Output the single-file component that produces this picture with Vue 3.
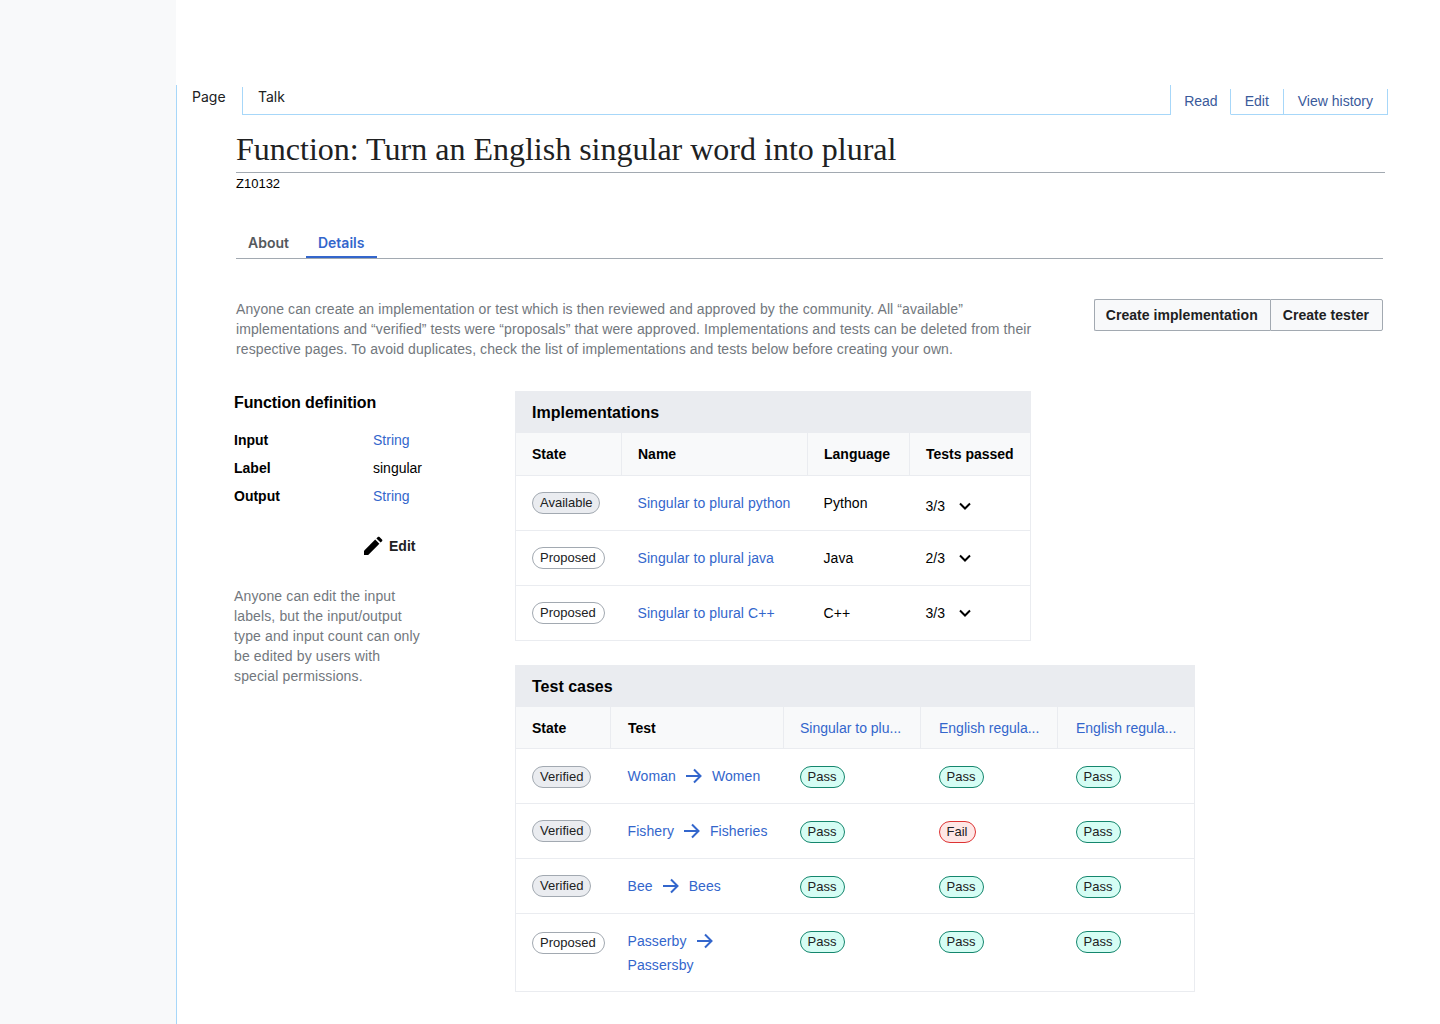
<script setup>
const implementations = [
  { state: "Available", name: "Singular to plural python", language: "Python", tests: "3/3", low: true },
  { state: "Proposed", name: "Singular to plural java", language: "Java", tests: "2/3" },
  { state: "Proposed", name: "Singular to plural C++", language: "C++", tests: "3/3" }
];

const testCases = [
  { state: "Verified", from: "Woman", to: "Women", results: ["Pass", "Pass", "Pass"] },
  { state: "Verified", from: "Fishery", to: "Fisheries", results: ["Pass", "Fail", "Pass"], raised: true },
  { state: "Verified", from: "Bee", to: "Bees", results: ["Pass", "Pass", "Pass"], raised: true },
  { state: "Proposed", from: "Passerby", to: "Passersby", results: ["Pass", "Pass", "Pass"], wrap: true }
];
</script>

<template>
  <div class="page">
    <aside class="sidebar"></aside>
    <main class="main">
      <nav class="page-tabs">
        <div class="tab tab-active tab-page">Page</div>
        <div class="tab tab-talk">Talk</div>
        <div class="tab-fill"></div>
        <div class="view-tabs">
          <a class="view-tab view-read">Read</a>
          <a class="view-tab view-edit">Edit</a>
          <a class="view-tab view-history">View history</a>
        </div>
      </nav>

      <div class="content">
        <h1 class="title">Function: Turn an English singular word into plural</h1>
        <div class="zid">Z10132</div>

        <div class="sub-tabs">
          <span class="sub-tab">About</span>
          <span class="sub-tab sub-tab-active">Details</span>
        </div>

        <div class="intro">
          <p class="intro-text">
            Anyone can create an implementation or test which is then reviewed and approved by the community. All “available”
            implementations and “verified” tests were “proposals” that were approved. Implementations and tests can be deleted from their
            respective pages. To avoid duplicates, check the list of implementations and tests below before creating your own.
          </p>
          <div class="btn-group">
            <button class="btn">Create implementation</button>
            <button class="btn">Create tester</button>
          </div>
        </div>

        <div class="columns">
          <section class="definition">
            <h2 class="def-title">Function definition</h2>
            <dl class="def-list">
              <dt>Input</dt>
              <dd><a class="link">String</a></dd>
              <dt>Label</dt>
              <dd>singular</dd>
              <dt>Output</dt>
              <dd><a class="link">String</a></dd>
            </dl>
            <div class="def-edit">
              <svg width="20" height="20" viewBox="0 0 20 20">
                <path d="M1 19v-4.2L12.2 3.6l4.2 4.2L5.2 19z" fill="#000" />
                <path d="M13.4 2.4l1.4-1.4c.5-.5 1.2-.5 1.7 0l2.5 2.5c.5.5.5 1.2 0 1.7l-1.4 1.4z" fill="#000" />
              </svg>
              <span>Edit</span>
            </div>
            <p class="def-help">
              Anyone can edit the input labels, but the input/output type and input count can only be edited by users with special permissions.
            </p>
          </section>

          <section class="tables">
            <div class="panel panel-impl">
              <div class="panel-title">Implementations</div>
              <table class="table">
                <colgroup>
                  <col style="width: 106px" />
                  <col style="width: 186px" />
                  <col style="width: 102px" />
                  <col />
                </colgroup>
                <thead>
                  <tr>
                    <th>State</th>
                    <th>Name</th>
                    <th>Language</th>
                    <th>Tests passed</th>
                  </tr>
                </thead>
                <tbody>
                  <tr v-for="item in implementations" :key="item.name">
                    <td><span class="badge" :class="item.state.toLowerCase()">{{ item.state }}</span></td>
                    <td><a class="link">{{ item.name }}</a></td>
                    <td>{{ item.language }}</td>
                    <td>
                      <div class="tests" :class="{ 'tests-low': item.low }">
                        <span>{{ item.tests }}</span>
                        <svg width="14" height="14" viewBox="0 0 14 14">
                          <path d="M2 4.5l5 5 5-5" fill="none" stroke="#000" stroke-width="2" />
                        </svg>
                      </div>
                    </td>
                  </tr>
                </tbody>
              </table>
            </div>

            <div class="panel panel-tests">
              <div class="panel-title">Test cases</div>
              <table class="table">
                <colgroup>
                  <col style="width: 95px" />
                  <col style="width: 173px" />
                  <col style="width: 137px" />
                  <col style="width: 137px" />
                  <col />
                </colgroup>
                <thead>
                  <tr>
                    <th>State</th>
                    <th>Test</th>
                    <th class="th-link"><a class="link">Singular to plu...</a></th>
                    <th class="th-link"><a class="link">English regula...</a></th>
                    <th class="th-link"><a class="link">English regula...</a></th>
                  </tr>
                </thead>
                <tbody>
                  <tr v-for="row in testCases" :key="row.from" :class="{ 'row-top': row.wrap }">
                    <td>
                      <span class="badge" :class="[row.state.toLowerCase(), { raised: row.raised }]">{{ row.state }}</span>
                    </td>
                    <td>
                      <div class="pair">
                        <a class="link">{{ row.from }}</a>
                        <svg width="16" height="16" viewBox="0 0 16 16">
                          <path d="M0 8h14.5M8 1.5L14.5 8 8 14.5" fill="none" stroke="#3366cc" stroke-width="2" />
                        </svg>
                        <a class="link">{{ row.to }}</a>
                      </div>
                    </td>
                    <td v-for="(result, i) in row.results" :key="i">
                      <span class="badge" :class="result.toLowerCase()">{{ result }}</span>
                    </td>
                  </tr>
                </tbody>
              </table>
            </div>
          </section>
        </div>
      </div>
    </main>
  </div>
</template>

<style>
html,
body {
  margin: 0;
  background: #fff;
}
</style>

<style scoped>
.page {
  display: flex;
  min-height: 1024px;
  font-family: "Liberation Sans", Arial, sans-serif;
  font-size: 14px;
  color: #000;
  overflow: hidden;
}

.sidebar {
  width: 176px;
  flex-shrink: 0;
  background: #f8f9fa;
}

.main {
  flex: 1;
  min-width: 0;
  padding-top: 85px;
  background: #fff;
}

.page-tabs {
  display: flex;
  height: 30px;
  padding-right: 52px;
  border-left: 1px solid #a7d7f9;
  font-family: Inter, sans-serif;
  font-size: 14px;
}

.tab {
  box-sizing: border-box;
  padding-top: 3px;
  line-height: 17px;
  color: #202122;
}

.tab-page {
  width: 66px;
  padding-left: 15px;
  border-right: 1px solid #a7d7f9;
  margin-top: 2px;
  padding-top: 1px;
}

.tab-talk {
  padding-left: 15px;
  padding-right: 0;
  width: 60px;
  border-bottom: 1px solid #a7d7f9;
}

.tab-fill {
  flex: 1;
  border-bottom: 1px solid #a7d7f9;
  border-right: 1px solid #a7d7f9;
}

.view-tabs {
  display: flex;
}

.view-tab {
  box-sizing: border-box;
  margin-top: 4px;
  padding: 0 13px 0 14px;
  border-right: 1px solid #a7d7f9;
  border-bottom: 1px solid #a7d7f9;
  font-family: "Liberation Sans", Arial, sans-serif;
  line-height: 25px;
  color: #3a5a9b;
}

.view-read {
  padding: 0 12px 0 13px;
  border-bottom-color: transparent;
}

.view-edit {
  padding-right: 14px;
}

.view-history {
  padding-right: 14px;
}

.content {
  padding: 0 55px 0 59px;
  border-left: 1px solid #a7d7f9;
  min-height: 909px;
  box-sizing: border-box;
}

.title {
  margin: 0;
  padding: 16px 0 5px;
  border-bottom: 1px solid #a2a9b1;
  font-family: "Liberation Serif", Georgia, serif;
  font-size: 32px;
  font-weight: 400;
  line-height: 36px;
  color: #202122;
}

.zid {
  margin-top: 3px;
  font-size: 13px;
  line-height: 16px;
  color: #000;
}

.sub-tabs {
  display: flex;
  gap: 5px;
  margin-top: 42px;
  margin-right: 2px;
  border-bottom: 1px solid #a2a9b1;
  font-family: Inter, sans-serif;
  font-weight: 600;
}

.sub-tab {
  padding: 0 12px 7px;
  line-height: 17px;
  color: #54595d;
}

.sub-tab-active {
  padding-right: 13px;
  color: #3366cc;
  box-shadow: inset 0 -2px 0 #3366cc;
}

.intro {
  display: flex;
  justify-content: space-between;
  align-items: flex-start;
  margin-top: 40px;
  margin-right: 2px;
}

.intro-text {
  margin: 0;
  width: 810px;
  line-height: 20px;
  letter-spacing: 0.1px;
  color: #72777d;
}

.btn-group {
  display: flex;
  margin-top: 0;
}

.btn {
  height: 32px;
  padding: 0 12px;
  border: 1px solid #a2a9b1;
  border-radius: 0;
  background: #f8f9fa;
  font-family: inherit;
  font-size: 14px;
  font-weight: 700;
  letter-spacing: 0.05px;
  color: #202122;
}

.btn:first-child {
  padding-left: 11px;
  border-radius: 2px 0 0 2px;
  border-right: 0;
}

.btn:last-child {
  padding-right: 13px;
  border-radius: 0 2px 2px 0;
}

.columns {
  display: flex;
  margin-top: 32px;
  margin-left: -2px;
}

.definition {
  width: 189px;
  margin-right: 92px;
  flex-shrink: 0;
}

.def-title {
  margin: 0;
  padding-top: 2px;
  font-size: 16px;
  font-weight: 700;
  line-height: 19px;
  letter-spacing: -0.1px;
}

.def-list {
  display: grid;
  grid-template-columns: 139px 1fr;
  grid-auto-rows: 28px;
  align-items: center;
  margin: 14px 0 0;
}

.def-list dt {
  font-weight: 700;
}

.def-list dd {
  margin: 0;
}

.def-edit {
  display: flex;
  align-items: center;
  gap: 6px;
  margin: 26px 0 0 129px;
  height: 20px;
  font-weight: 700;
  color: #202122;
}

.def-help {
  margin: 30px 0 0;
  line-height: 20px;
  letter-spacing: 0.13px;
  color: #72777d;
}

.link {
  color: #3366cc;
}

.tables {
  display: flex;
  flex-direction: column;
  gap: 24px;
}

.panel {
  box-sizing: border-box;
}

.panel-impl {
  width: 516px;
}

.panel-tests {
  width: 680px;
}

.panel-title {
  box-sizing: border-box;
  height: 42px;
  padding: 1px 0 0 17px;
  background: #eaecf0;
  font-size: 16px;
  font-weight: 700;
  line-height: 42px;
}

.table {
  width: 100%;
  border-collapse: collapse;
  table-layout: fixed;
  border: 1px solid #eaecf0;
  border-top: 0;
}

.table th {
  height: 42px;
  padding: 0 0 0 16px;
  border-bottom: 1px solid #eaecf0;
  border-right: 1px solid #eaecf0;
  background: #f8f9fa;
  text-align: left;
  font-weight: 700;
}

.panel-tests .table th {
  height: 41px;
  padding-top: 1px;
  box-sizing: border-box;
}

.table th:last-child {
  border-right: 0;
}

.table th.th-link {
  font-weight: 400;
}

.table td {
  height: 54px;
  padding: 0 0 0 16px;
  border-bottom: 1px solid #eaecf0;
  vertical-align: middle;
  letter-spacing: 0.08px;
}

.panel-tests .table th:nth-child(2),
.panel-tests .table td:nth-child(2) {
  padding-left: 17px;
}

.panel-tests .table th:nth-child(4),
.panel-tests .table td:nth-child(4) {
  padding-left: 18px;
}

.panel-tests .table th:nth-child(5),
.panel-tests .table td:nth-child(5) {
  padding-left: 18px;
}

.badge {
  display: inline-block;
  box-sizing: border-box;
  height: 22px;
  padding: 0 7px;
  border: 1px solid #a2a9b1;
  border-radius: 11px;
  font-size: 13px;
  line-height: 20px;
  letter-spacing: 0;
  color: #202122;
}

.panel-tests .badge {
  transform: translateY(1px);
}

.panel-tests .raised {
  transform: none;
}

.available {
  padding-right: 6px;
  background: #eaecf0;
}

.verified {
  background: #eaecf0;
}

.proposed {
  padding-right: 8px;
  background: #fff;
}

.pass {
  padding-right: 8px;
  border-color: #14866d;
  background: #d5fdf4;
}

.fail {
  padding-right: 8px;
  border-color: #dd3333;
  background: #fee7e6;
}

.tests {
  display: flex;
  align-items: center;
  gap: 13px;
}

.tests-low {
  padding-top: 5px;
}

.pair {
  display: flex;
  flex-wrap: wrap;
  align-items: center;
  gap: 0 10px;
  line-height: 24px;
}

.row-top td {
  height: 78px;
  padding-top: 16px;
  padding-bottom: 6px;
  box-sizing: border-box;
  vertical-align: top;
}

.row-top td:first-child {
  padding-top: 17px;
}

.panel-tests .row-top td:nth-child(2) {
  padding-top: 15px;
}
</style>
